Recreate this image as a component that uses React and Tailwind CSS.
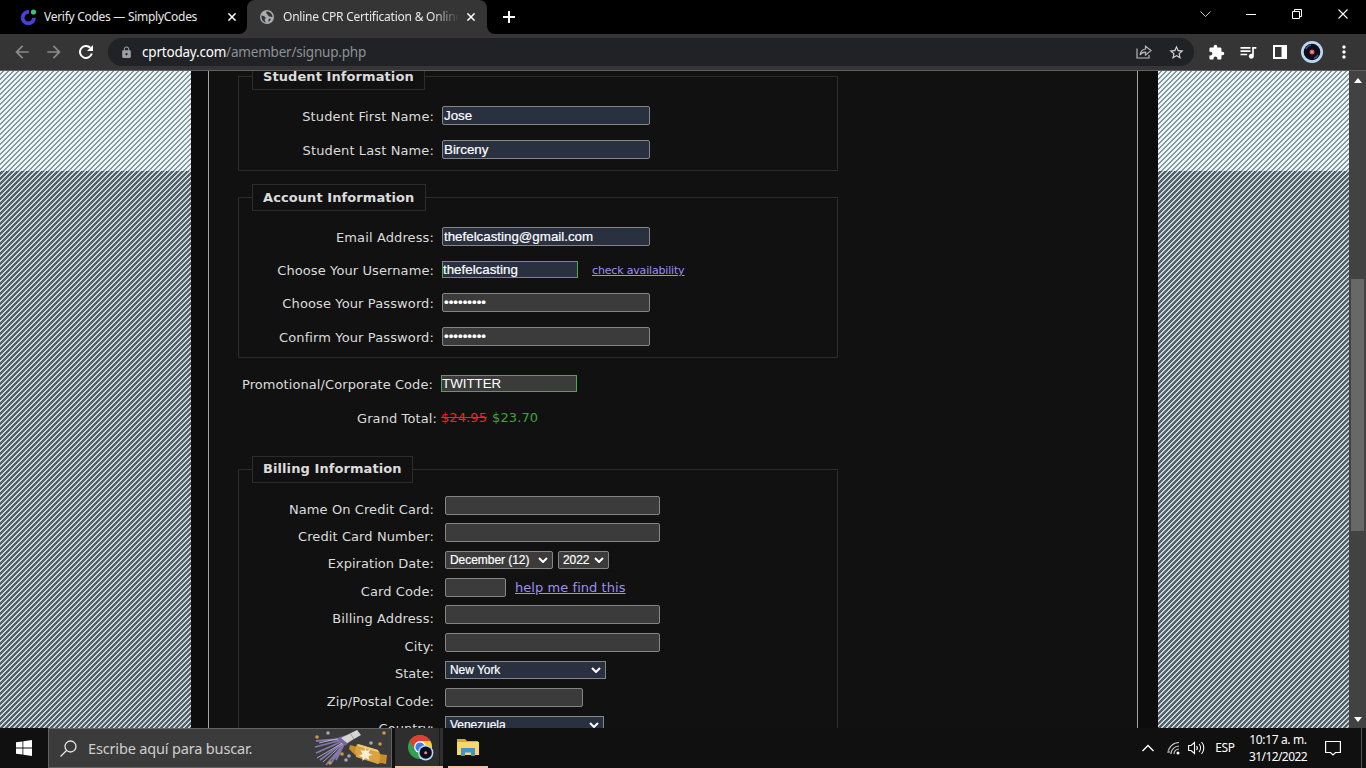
import { MdExtension, MdQueueMusic, MdLock, MdStarBorder, MdArrowBack, MdArrowForward, MdMoreVert } from 'react-icons/md';

const tray = 'flex h-full items-center justify-center';

function Fieldset({ title, legendClass, className, children }) {
  return (
    <fieldset className={`w-[600px] border border-[#2c2c2c] ${className}`}>
      <legend className={`ml-[13px] flex h-[27px] items-center whitespace-nowrap border border-[#2c2c2c] pl-2.5 text-[13px] font-bold tracking-[0.08px] ${legendClass}`}>{title}</legend>
      {children}
    </fieldset>
  );
}

function Row({ label, className, labelClass = 'pt-px tracking-[0.12px]', gap = 'ml-2', children }) {
  return (
    <div className={`flex items-start ${className}`}>
      <label className={`flex w-[195px] shrink-0 justify-end whitespace-nowrap text-[13px] leading-[19px] ${labelClass}`}>{label}</label>
      <div className={`flex items-start ${gap}`}>{children}</div>
    </div>
  );
}

function Input({ className = 'w-52 bg-[#3b3b3b]', type = 'text', value = '' }) {
  return (
    <input
      type={type}
      defaultValue={value}
      className={`h-[19px] rounded-[2px] border border-[#858585] px-px font-['Liberation_Sans',sans-serif] text-[13.33px] leading-[15px] text-white outline-none [-webkit-text-stroke:0.2px] ${className}`}
    />
  );
}

function CodeInput({ className, value }) {
  return (
    <input
      defaultValue={value}
      className={`h-[17px] w-[136px] border border-[#43ae43] font-['Liberation_Sans',sans-serif] text-[13.33px] leading-[15px] text-white outline-none ${className}`}
    />
  );
}

function Select({ className, value }) {
  return (
    <div className={`flex h-[18px] items-center justify-between border border-[#858585] pl-1 pr-1 font-['Liberation_Sans',sans-serif] text-[12px] leading-4 text-white [-webkit-text-stroke:0.2px] ${className}`}>
      <span className="whitespace-nowrap tracking-[-0.05px]">{value}</span>
      <svg width="10" height="6" viewBox="0 0 10 6" fill="none" stroke="currentColor" strokeWidth="2"><path d="M1 1l4 4 4-4" /></svg>
    </div>
  );
}

function Stripes() {
  return (
    <div className="flex w-[191px] shrink-0 flex-col">
      <div className="h-[100px] bg-[repeating-linear-gradient(135deg,#eaf5f8_0px,#eaf5f8_2.1px,#88979d_2.1px,#88979d_3.5355px)]" />
      <div className="flex-1 bg-[repeating-linear-gradient(135deg,#cbd8dc_0px,#cbd8dc_1.4px,#536067_1.4px,#536067_3.5355px)]" />
    </div>
  );
}

function Avatar({ size }) {
  return (
    <svg width={size} height={size} viewBox="0 0 22 22">
      <circle cx="11" cy="11" r="11" fill="#b9d9f2" />
      <circle cx="11" cy="11" r="8.3" fill="#0b0c1c" />
      <path d="M5 8a7 7 0 0 1 5-4M17 14a7 7 0 0 1-4 3" stroke="#45506b" strokeWidth="1.5" fill="none" />
      <circle cx="11" cy="11" r="2.5" fill="#e0525a" />
      <circle cx="11" cy="11" r="1" fill="#ffb3a8" />
    </svg>
  );
}

function CloseIcon({ size = 8, width = 1.9 }) {
  return (
    <svg width={size} height={size} viewBox="0 0 10 10" stroke="white" strokeWidth={width}><path d="M.5.5l9 9M9.5.5l-9 9" /></svg>
  );
}

function TabStrip() {
  return (
    <div className="flex h-[34px] bg-black text-[12px] text-[#e8e8e8]">
      <div className="flex w-[247px] items-center pl-5">
        <svg width="17" height="17" viewBox="0 0 17 17" fill="none">
          <path d="M9 3A5.7 5.7 0 1 0 14 8.8" stroke="#4a3fd6" strokeWidth="3.8" />
          <circle cx="13.5" cy="3" r="2.6" fill="#3fc26d" />
        </svg>
        <span className="ml-[7px] w-[184px] whitespace-nowrap tracking-[-0.28px]">Verify Codes — SimplyCodes</span>
        <CloseIcon />
      </div>
      <div className="relative flex w-60 items-center rounded-t-lg bg-[#353535] pl-[13px]">
        <svg className="absolute -left-2 bottom-0" width="8" height="8"><path d="M8 0v8H0A8 8 0 0 0 8 0z" fill="#353535" /></svg>
        <svg className="absolute -right-2 bottom-0" width="8" height="8"><path d="M0 0v8h8A8 8 0 0 1 0 0z" fill="#353535" /></svg>
        <svg className="shrink-0" width="14" height="14" viewBox="0 0 14 14">
          <circle cx="7" cy="7" r="7" fill="#a9adb1" />
          <path d="M1.500 5.500c2 .3 3.500.8 4 2 .3 1-.2 1.500-1 2l1.500 3C3 12 1 9 1.500 5.500zM6 1.500c1 1.500 0 2.500 1.500 3 .8.500.5 2 2 2 1 0 1.500.8 3 .5C12.500 4 10 1 6 1.500zM8.500 9l2.500-.5c-.5 1.500-1 2.500-2.500 3.500z" fill="#353535" />
        </svg>
        <span className="ml-[9px] w-[176px] shrink-0 overflow-hidden whitespace-nowrap tracking-[-0.23px] [mask-image:linear-gradient(to_right,black_150px,transparent)]">Online CPR Certification &amp; Online</span>
        <span className="ml-2"><CloseIcon /></span>
      </div>
      <div className="flex w-[44px] items-center justify-center">
        <svg width="12" height="12" stroke="white" strokeWidth="2"><path d="M6 0v12M0 6h12" /></svg>
      </div>
      <div className="ml-auto flex h-7">
        <div className="flex w-[46px] items-center justify-center"><svg width="11" height="7" viewBox="0 0 11 7" fill="none" stroke="#ccc"><path d="M.5.5l5 5 5-5" /></svg></div>
        <div className="flex w-[46px] items-center justify-center"><div className="h-px w-2.5 bg-white" /></div>
        <div className="flex w-[46px] items-center justify-center">
          <svg width="10" height="10" fill="none" stroke="white"><path d="M.5 2.5h7v7h-7zM2.5 2.5v-2h7v7h-2" /></svg>
        </div>
        <div className="flex w-[46px] items-center justify-center"><CloseIcon size={10} width={1.1} /></div>
      </div>
    </div>
  );
}

function Toolbar() {
  return (
    <div className="flex h-[37px] items-center border-b border-[#606060] bg-[#353535] pl-[6px] text-white">
      <div className="flex w-8 justify-center text-[#8b8b8b]"><MdArrowBack size={20} /></div>
      <div className="flex w-8 justify-center text-[#8b8b8b]"><MdArrowForward size={20} /></div>
      <div className="flex w-8 justify-center">
        <svg width="14" height="14" viewBox="0 0 14 14" fill="none">
          <path d="M12.800 8.600A6 6 0 1 1 11.300 2.800" stroke="white" strokeWidth="2" />
          <path d="M14 0v6H8z" fill="white" />
        </svg>
      </div>
      <div className="ml-[6px] flex h-7 w-[1086px] items-center rounded-full bg-[#202226] px-[2px]">
        <div className="flex w-8 justify-center text-[#9aa0a6]"><MdLock size={13} /></div>
        <span className="text-[13.5px] tracking-[-0.2px] text-[#8d9195]"><span className="text-white">cprtoday.com</span>/amember/signup.php</span>
        <div className="ml-auto flex w-8 justify-center">
          <svg width="16" height="16" viewBox="0 0 16 16" fill="none" stroke="#b7babd" strokeWidth="1.2">
            <path d="M1 4.5V14h12v-3M9.5 5V2.2L15 6.600l-5.500 4.400V8.200C7 8.200 5.200 9 4 11 4.500 7.500 6.500 5.500 9.500 5z" />
          </svg>
        </div>
        <div className="flex w-8 justify-center text-[#d4d6d8]"><MdStarBorder size={17} /></div>
      </div>
      <div className="ml-[6px] flex w-8 justify-center"><MdExtension size={17} /></div>
      <div className="flex w-8 justify-center"><MdQueueMusic size={20} /></div>
      <div className="flex w-8 justify-center">
        <svg width="14" height="14" viewBox="0 0 14 14"><path d="M0 0h14v14H0zM2 2v10h6.500V2z" fill="white" fillRule="evenodd" /></svg>
      </div>
      <div className="flex w-8 justify-center"><Avatar size={22} /></div>
      <div className="flex w-8 justify-center"><MdMoreVert size={20} /></div>
    </div>
  );
}

function SignupForm() {
  const wide = 'w-[215px] bg-[#3b3b3b]';
  const filled = 'w-52 bg-[#293040]';
  const billing = { labelClass: 'pt-1 tracking-[0.1px]', gap: 'ml-[11px]' };
  const billingUp = { labelClass: 'pt-[3px] tracking-[0.05px]', gap: 'ml-[11px]' };
  return (
    <form className="-mt-2 flex flex-col pl-[29px]">
      <Fieldset title="Student Information" legendClass="w-[173px]" className="h-[108px] shrink-0">
        <Row label="Student First Name:" className="mt-4 h-[34px]"><Input className={filled} value="Jose" /></Row>
        <Row label="Student Last Name:" className="h-[19px]"><Input className={filled} value="Birceny" /></Row>
      </Fieldset>

      <Fieldset title="Account Information" legendClass="w-[174px]" className="mt-[13px] h-[174px] shrink-0">
        <Row label="Email Address:" className="mt-4 h-[34px]"><Input className={filled} value="thefelcasting@gmail.com" /></Row>
        <Row label="Choose Your Username:" className="h-8" labelClass="tracking-[0.1px]">
          <CodeInput className="bg-[#293040] [-webkit-text-stroke:0.2px]" value="thefelcasting" />
          <a className="ml-3.5 whitespace-nowrap text-[11px] leading-[19px] tracking-[-0.17px] text-[#9c8ff2] underline">check availability</a>
        </Row>
        <Row label="Choose Your Password:" className="h-[34px]"><Input type="password" value="jbirceny1" /></Row>
        <Row label="Confirm Your Password:" className="h-[19px]"><Input type="password" value="jbirceny1" /></Row>
      </Fieldset>

      <Row label="Promotional/Corporate Code:" className="mt-[17px] h-[34px]" labelClass="tracking-[0.08px]">
        <CodeInput className="bg-[#3b3b3b]" value="TWITTER" />
      </Row>
      <div className="flex h-[47px] pl-[119px] text-[13px] leading-[18px] tracking-[0.1px]">
        <span className="w-[84px] whitespace-nowrap pt-px">Grand Total:</span>
        <span className="text-[#f0221c] line-through">$24.95</span>
        <span className="ml-[5px] text-[#3fa535]">$23.70</span>
      </div>

      <Fieldset title="Billing Information" legendClass="w-[161px] pb-0.5" className="h-[400px] shrink-0">
        <Row label="Name On Credit Card:" className="mt-[13px] h-[27px]" {...billing}><Input className={wide} /></Row>
        <Row label="Credit Card Number:" className="h-7" {...billing}><Input className={wide} /></Row>
        <Row label="Expiration Date:" className="h-[27px]" {...billingUp}>
          <Select className="w-[108px] rounded-[2px] bg-[#3b3b3b]" value="December (12)" />
          <Select className="ml-[5px] w-[51px] rounded-[2px] bg-[#3b3b3b]" value="2022" />
        </Row>
        <Row label="Card Code:" className="h-[27px]" {...billing}>
          <Input className="w-[61px] bg-[#3b3b3b]" />
          <a className="ml-[9px] whitespace-nowrap text-[13px] leading-[19px] tracking-[0.06px] text-[#9c8ff2] underline">help me find this</a>
        </Row>
        <Row label="Billing Address:" className="h-7" {...billing}><Input className={wide} /></Row>
        <Row label="City:" className="h-7" {...billing}><Input className={wide} /></Row>
        <Row label="State:" className="h-[27px]" {...billingUp}><Select className="w-[161px] bg-[#293040]" value="New York" /></Row>
        <Row label="Zip/Postal Code:" className="h-7" {...billing}><Input className="w-[138px] bg-[#3b3b3b]" /></Row>
        <Row label="Country:" className="h-7" {...billingUp}><Select className="w-[159px] bg-[#293040]" value="Venezuela" /></Row>
      </Fieldset>
    </form>
  );
}

function Scrollbar() {
  return (
    <div className="flex w-[17px] shrink-0 flex-col items-center bg-[#424242]">
      <svg className="mt-[7px]" width="8" height="5"><path d="M0 5l4-5 4 5z" fill="white" /></svg>
      <div className="mt-[196px] h-[252px] w-[13px] bg-[#686868]" />
      <svg className="mb-[6px] mt-auto" width="8" height="5"><path d="M0 0l4 5 4-5z" fill="white" /></svg>
    </div>
  );
}

function PartyIcon() {
  return (
    <svg width="74" height="38" viewBox="0 0 74 38" fill="none">
      <path d="M28 10L2 12M28 11L1 18M29 12L2 24M30 13L6 31M31 14L12 36M31 14L17 34M30 15L22 31" stroke="#8478ad" strokeWidth="1.8" />
      <path d="M27 9L5 14M30 13L3 29M31 13L9 33" stroke="#cbc3e0" strokeWidth=".8" />
      <path d="M23 9l8 8 6-5-5-6z" fill="#7167a0" />
      <path d="M27 9L43 1l4 5-14 8z" fill="#d8d5d1" />
      <path d="M36 4l4 6" stroke="#a29b95" />
      <path d="M36 16l8 2-3 8-6-6z" fill="#c78d2d" />
      <path d="M65 25l8 1-1 9-5-1-4 1z" fill="#c78d2d" />
      <path d="M43 15l22 7q3 6-1 13l-22-7q-2-6 1-13z" fill="#d9a341" />
      <path d="M44 16l20 6" stroke="#f1cb79" strokeWidth="2" />
      <path d="M51 18l1.500 4 4-2-2 4 4 2-4 1 1 4-4-2-3 3v-4l-4-1 4-2-2-4 4 1z" fill="#f7efd8" />
      <g fill="#c99a45"><circle cx="3" cy="8" r="1.800" /><circle cx="28" cy="25" r="1.800" /><circle cx="16" cy="34" r="1.800" /><circle cx="70" cy="4" r="1.800" /><circle cx="66" cy="15" r="1.800" /></g>
      <g fill="#aaa3bd"><circle cx="14" cy="4" r="1.800" /><circle cx="57" cy="14" r="1.800" /><circle cx="35" cy="27" r="1.800" /><circle cx="32" cy="31" r="1.800" /></g>
    </svg>
  );
}

function ChromeIcon() {
  return (
    <svg width="28" height="28" viewBox="0 0 28 28">
      <circle cx="13" cy="13" r="12" fill="#2fa14f" />
      <path d="M13 13L2.600 7A12 12 0 0 1 23.400 7z" fill="#e2402f" />
      <path d="M13 13V7h10.400A12 12 0 0 1 13 25z" fill="#f8cb2e" />
      <path d="M13 13L2.600 7 8 16z" fill="#e2402f" />
      <circle cx="13" cy="13" r="5.900" fill="white" />
      <circle cx="13" cy="13" r="4.600" fill="#3d7de6" />
      <g transform="translate(11 11) scale(.7)">
        <circle cx="11" cy="11" r="11" fill="#b9d9f2" />
        <circle cx="11" cy="11" r="8.800" fill="#0b0c1c" />
        <circle cx="11" cy="11" r="2.200" fill="#e88088" />
      </g>
    </svg>
  );
}

function Taskbar() {
  return (
    <div className="flex h-10 bg-[#101010] text-white">
      <div className={`w-12 ${tray}`}>
        <svg width="16" height="16" viewBox="0 0 16 16" fill="white"><path d="M0 2.300L6.500 1.400v6.200H0zM7.300 1.300L16 0v7.600H7.300zM0 8.400h6.500v6.200L0 13.700zM7.300 8.400H16V16l-8.700-1.300z" /></svg>
      </div>
      <div className="flex w-[344px] items-center border border-[#626262] bg-[#3b3b3b] pl-[11px]">
        <svg width="17" height="17" viewBox="0 0 17 17" fill="none" stroke="#e6e6e6" strokeWidth="1.300"><circle cx="10.500" cy="6.500" r="5.500" /><path d="M6.500 10.500L.5 16.500" /></svg>
        <span className="ml-[11px] whitespace-nowrap pt-px text-[14.5px] tracking-[-0.16px] text-[#cfcfcf]">Escribe aquí para buscar.</span>
        <div className="ml-auto mr-[3px]"><PartyIcon /></div>
      </div>
      <div className="ml-[3px] flex w-12 border-b-2 border-[#f5bfa8] bg-[#2e2e2e]">
        <div className="flex w-[45px] items-center justify-center border-r border-[#1b1b1b] pl-2 pt-0.5"><ChromeIcon /></div>
      </div>
      <div className="ml-[5px] flex w-10 items-center justify-center border-b-2 border-[#f5bfa8]">
        <svg width="22" height="19" viewBox="0 0 22 19">
          <path d="M0 1h8l2 2h11v14H0z" fill="#e2a42e" />
          <path d="M0 4h22v13H0z" fill="#fbd766" />
          <path d="M4 18v-8h14v8h-4v-3.500H8V18z" fill="#3f95c9" />
        </svg>
      </div>
      <div className="ml-auto flex h-full">
        <div className={`w-6 ${tray}`}><svg width="12" height="8" fill="none" stroke="white" strokeWidth="1.400"><path d="M.5 7L6 1.500 11.500 7" /></svg></div>
        <div className={`w-7 ${tray}`}>
          <svg width="14" height="14" viewBox="0 0 14 14" fill="none" stroke="#ccc" strokeWidth="1.100">
            <path d="M1 12A11 11 0 0 1 12 1.500M4 13a8 8 0 0 1 8-8M7 13a5 5 0 0 1 5-5" /><path d="M1 9l3 4" stroke="#888" /><circle cx="11" cy="12" r="1.500" fill="white" stroke="none" />
          </svg>
        </div>
        <div className={`w-4 ${tray}`}>
          <svg className="shrink-0" width="17" height="14" viewBox="0 0 17 14" fill="none" stroke="white" strokeWidth="1.100"><path d="M.6 4.500h2.500L6.500 1.500v11L3.100 9.500H.6zM8.500 5a3 3 0 0 1 0 4M11 3a6 6 0 0 1 0 8M13.500 1a9 9 0 0 1 0 12" /></svg>
        </div>
        <div className={`w-[42px] text-[12px] tracking-[-0.3px] ${tray}`}>ESP</div>
        <div className="flex w-16 flex-col items-center justify-center whitespace-nowrap text-[12px] leading-[17px]">
          <span className="tracking-[-0.35px]">10:17 a. m.</span>
          <span className="tracking-[-0.6px]">31/12/2022</span>
        </div>
        <div className={`w-[46px] ${tray}`}>
          <svg width="16" height="16" viewBox="0 0 16 16" fill="none" stroke="white" strokeWidth="1.200"><path d="M.6 1.500h14.800v11H10.500L8 15l-2.500-2.500H.6z" /></svg>
        </div>
        <div className="ml-[5px] mr-1 w-px bg-[#555]" />
      </div>
    </div>
  );
}

export default function App() {
  return (
    <div className="flex h-[768px] w-[1366px] flex-col overflow-hidden bg-black font-['Noto_Sans',sans-serif]">
      <TabStrip />
      <Toolbar />
      <div className="flex h-[657px] overflow-hidden font-['DejaVu_Sans',sans-serif] text-[#dcdcdc]">
        <Stripes />
        <div className="flex w-[967px] bg-[#0c0c0d] pl-[17px] pr-5">
          <div className="w-[930px] overflow-hidden border-x border-[#a5a5a5] bg-[#111111]">
            <SignupForm />
          </div>
        </div>
        <Stripes />
        <Scrollbar />
      </div>
      <Taskbar />
    </div>
  );
}
